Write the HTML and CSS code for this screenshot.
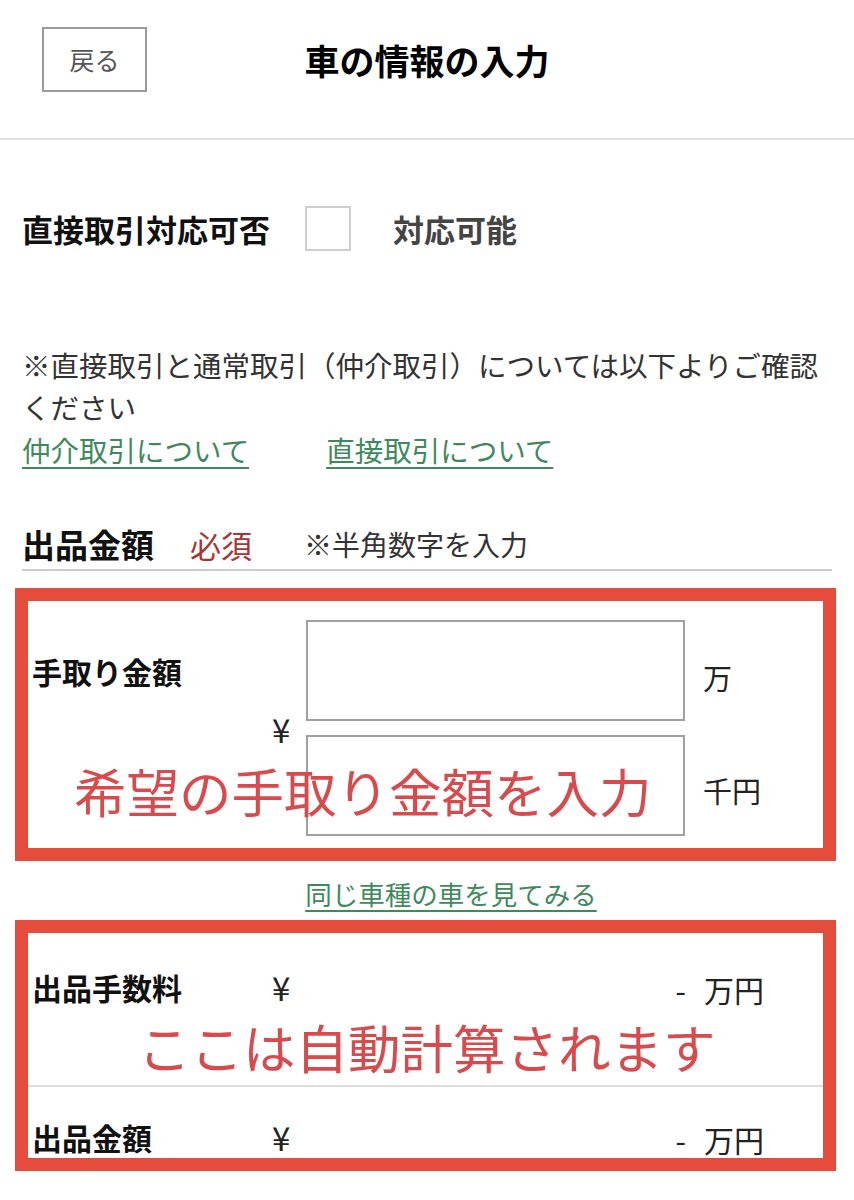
FILE: index.html
```html
<!DOCTYPE html>
<html lang="ja">
<head>
<meta charset="utf-8">
<title>車の情報の入力</title>
<link rel="stylesheet" href="styles.css">
</head>
<body>
<header class="header">
  <div class="header-left"><button class="back">戻る</button></div>
  <h1 class="title">車の情報の入力</h1>
  <div class="header-right"></div>
</header>

<main class="main">
  <div class="direct-row">
    <span class="direct-label">直接取引対応可否</span>
    <span class="checkbox"></span>
    <span class="direct-value">対応可能</span>
  </div>

  <p class="note">※直接取引と通常取引（仲介取引）については以下よりご確認ください</p>
  <div class="links">
    <a class="link" href="#">仲介取引について</a>
    <a class="link" href="#">直接取引について</a>
  </div>

  <div class="price-head">
    <span class="price-title">出品金額</span>
    <span class="required">必須</span>
    <span class="hint">※半角数字を入力</span>
  </div>

  <section class="redbox takehome-box">
    <div class="takehome">
      <span class="th-label">手取り金額</span>
      <span class="yen yen-span">¥</span>
      <span class="input input1"></span>
      <span class="unit unit1">万</span>
      <span class="input input2"></span>
      <span class="unit unit2">千円</span>
    </div>
    <div class="annotation ann1">希望の手取り金額を入力</div>
  </section>

  <div class="same-wrap"><a class="link same-link" href="#">同じ車種の車を見てみる</a></div>

  <section class="redbox calc-box">
    <div class="calc-row row-fee">
      <span class="calc-label">出品手数料</span>
      <span class="yen">¥</span>
      <span class="calc-value"><span class="dash">-</span>万円</span>
    </div>
    <div class="calc-row row-total">
      <span class="calc-label">出品金額</span>
      <span class="yen">¥</span>
      <span class="calc-value"><span class="dash">-</span>万円</span>
    </div>
    <div class="annotation ann2">ここは自動計算されます</div>
  </section>
</main>
</body>
</html>
```

FILE: styles.css
```css
* { box-sizing: border-box; }

body {
  margin: 0;
  background: #fff;
  color: #222;
  font-family: "Noto Sans CJK JP", "Noto Sans", sans-serif;
}

.header {
  display: grid;
  grid-template-columns: 1fr auto 1fr;
  align-items: center;
  padding: 27px 42px 46px 42px;
  border-bottom: 2px solid #e2e2e2;
}

.back {
  width: 105px;
  height: 65px;
  border: 2px solid #9a9a9a;
  background: #fff;
  color: #555;
  font-family: inherit;
  font-size: 25px;
  line-height: 1;
  padding: 0;
}

.title {
  margin: 0;
  font-size: 35px;
  font-weight: 700;
  color: #000;
  line-height: 1;
}

.direct-row {
  display: flex;
  align-items: center;
  margin-top: 66px;
  padding-left: 22px;
  height: 45px;
}

.direct-label {
  font-size: 31px;
  font-weight: 700;
  color: #111;
}

.checkbox {
  width: 46px;
  height: 45px;
  border: 2px solid #cfcfcf;
  margin-left: 35px;
}

.direct-value {
  margin-left: 42px;
  font-size: 31px;
  font-weight: 700;
  color: #444;
}

.note {
  margin: 93px 20px 0 22px;
  font-size: 28.5px;
  line-height: 42px;
  color: #333;
}

.links {
  display: flex;
  gap: 77px;
  margin-top: 1px;
  padding-left: 22px;
  font-size: 28.5px;
  line-height: 42px;
}

.link {
  color: #3f8a5c;
  text-decoration: underline;
  text-underline-offset: 5px;
  text-decoration-thickness: 2px;
}

.price-head {
  display: flex;
  align-items: center;
  margin: 50px 22px 0 22px;
  height: 46px;
  padding-bottom: 2px;
  box-sizing: content-box;
  border-bottom: 2px solid #cccccc;
}

.price-title {
  font-size: 33px;
  font-weight: 700;
  color: #111;
}

.required {
  margin-left: 36px;
  font-size: 31px;
  color: #a83434;
}

.hint {
  margin-left: 52px;
  font-size: 28px;
  color: #333;
}

.redbox {
  position: relative;
  margin: 17px 18px 0 15px;
  border: 13px solid #e54c3c;
  background: #fff;
}

.takehome {
  display: grid;
  grid-template-columns: 240px 34px 379px auto;
  grid-template-rows: 101px 101px;
  row-gap: 14px;
  padding: 19px 0 12px 4px;
}

.th-label {
  grid-column: 1;
  grid-row: 1;
  align-self: center;
  font-size: 30px;
  font-weight: 700;
  color: #111;
}

.yen {
  font-size: 33px;
  line-height: 1;
  color: #222;
}

.yen-span {
  grid-column: 2;
  grid-row: 1 / 3;
  align-self: center;
  margin-top: 2px;
}

.input {
  grid-column: 3;
  border: 2px solid #a0a0a0;
  background: #fff;
}

.input1 { grid-row: 1; }
.input2 { grid-row: 2; }

.unit {
  grid-column: 4;
  align-self: center;
  margin-left: 18px;
  font-size: 29px;
  color: #222;
}

.unit1 { grid-row: 1; margin-top: 12px; }
.unit2 { grid-row: 2; margin-top: 8px; }

.annotation {
  position: absolute;
  font-size: 52.5px;
  line-height: 1;
  color: #d84a4c;
  white-space: nowrap;
}

.ann1 { left: 46px; top: 163px; }
.ann2 { left: 110px; top: 87px; }

.same-wrap {
  margin-top: 15px;
  padding-left: 48px;
  text-align: center;
  font-size: 26.5px;
  line-height: 36px;
}

.calc-box {
  margin-top: 8px;
}

.calc-row {
  display: flex;
  align-items: center;
  padding-left: 4px;
  padding-right: 59px;
  line-height: 34px;
}

.row-fee {
  padding-top: 35px;
  padding-bottom: 79px;
  border-bottom: 2px solid #dedede;
}

.row-total {
  padding-top: 31px;
  padding-bottom: 2px;
}

.calc-label {
  width: 240px;
  font-size: 30px;
  font-weight: 700;
  color: #111;
}

.calc-value {
  margin-left: auto;
  font-size: 30px;
  color: #222;
  margin-top: 4px;
}

.dash {
  margin-right: 18px;
}
```
